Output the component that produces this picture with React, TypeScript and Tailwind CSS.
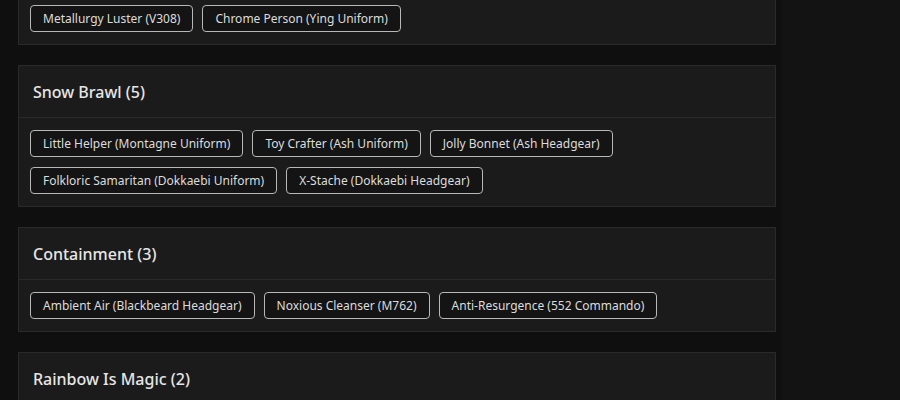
import React from "react"

type Group = { title?: string; items: string[] }

const groups: Group[] = [
    { items: ["Metallurgy Luster (V308)", "Chrome Person (Ying Uniform)"] },
    {
        title: "Snow Brawl (5)",
        items: [
            "Little Helper (Montagne Uniform)",
            "Toy Crafter (Ash Uniform)",
            "Jolly Bonnet (Ash Headgear)",
            "Folkloric Samaritan (Dokkaebi Uniform)",
            "X-Stache (Dokkaebi Headgear)",
        ],
    },
    {
        title: "Containment (3)",
        items: [
            "Ambient Air (Blackbeard Headgear)",
            "Noxious Cleanser (M762)",
            "Anti-Resurgence (552 Commando)",
        ],
    },
    { title: "Rainbow Is Magic (2)", items: [] },
]

function Pill({ label }: { label: string }) {
    return (
        <span className="flex h-[27px] items-center rounded-[4px] border border-[#b8b8b8] bg-[#141414] px-3 text-[12px] text-[#dcdcdc]">
            {label}
        </span>
    )
}

function GroupCard({ group, first }: { group: Group; first?: boolean }) {
    return (
        <section className={`${first ? "-mt-[8px]" : ""} border border-[#2a2a2a] bg-[#1b1b1b]`}>
            {group.title && (
                <header className="flex h-[52px] items-center border-b border-[#2a2a2a] px-[14px]">
                    <h3 className="text-[16px] font-medium text-[#e6e6e6]">{group.title}</h3>
                </header>
            )}
            {group.items.length > 0 && (
                <div className="flex flex-wrap gap-x-[9px] gap-y-[10px] px-[11px] py-3">
                    {group.items.map((item) => (
                        <Pill key={item} label={item} />
                    ))}
                </div>
            )}
        </section>
    )
}

export default function App() {
    return (
        <div
            className="flex h-[400px] w-[900px] overflow-hidden bg-[#131313]"
            style={{ fontFamily: '"Noto Sans", "Open Sans", sans-serif' }}
        >
            <div className="flex w-[781px] flex-col gap-[20px] bg-[#0f0f0f] pl-[18px] pr-[5px]">
                {groups.map((g, i) => (
                    <GroupCard key={i} group={g} first={i === 0} />
                ))}
            </div>
        </div>
    )
}
